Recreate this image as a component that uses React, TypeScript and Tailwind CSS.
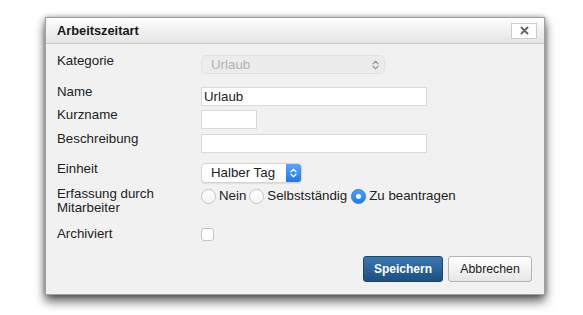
import React from "react";

const font = { fontFamily: '"Liberation Sans", Arial, sans-serif' };

function Chevrons({ color, size = 10 }: { color: string; size?: number }) {
  return (
    <svg width={size * 0.7} height={size} viewBox="0 0 7 10" fill="none">
      <path d="M1 3.8 L3.5 1.3 L6 3.8" stroke={color} strokeWidth="1.3" strokeLinecap="round" strokeLinejoin="round" />
      <path d="M1 6.2 L3.5 8.7 L6 6.2" stroke={color} strokeWidth="1.3" strokeLinecap="round" strokeLinejoin="round" />
    </svg>
  );
}

function Radio({ checked }: { checked?: boolean }) {
  if (checked) {
    return (
      <span className="w-[15px] h-[15px] rounded-full bg-gradient-to-b from-[#4aa3ff] to-[#1a7cf0] border border-[#2a78d8] flex items-center justify-center shrink-0">
        <span className="w-[5px] h-[5px] rounded-full bg-white" />
      </span>
    );
  }
  return (
    <span className="w-[15px] h-[15px] rounded-full bg-gradient-to-b from-white to-[#f4f4f4] border border-[#c4c4c4] shrink-0" />
  );
}

export default function App() {
  return (
    <div className="w-[583px] h-[315px] bg-white relative" style={font}>
      <div className="absolute left-[45px] top-[17px] w-[500px] h-[278px] bg-[#f1f1f1] border border-[#a0a0a0] shadow-[0_6px_10px_rgba(0,0,0,0.65),0_0_5px_rgba(0,0,0,0.3)] flex flex-col">
        {/* Header */}
        <div className="h-[26px] shrink-0 bg-gradient-to-b from-[#fefefe] to-[#e4e4e4] border-b border-[#c9c9c9] flex items-center justify-between pl-[11px] pr-[7px]">
          <span className="text-[12.8px] font-bold text-[#1a1a1a]">Arbeitszeitart</span>
          <button className="w-[26px] h-[16px] bg-white border border-[#cdcdcd] flex items-center justify-center">
            <svg width="9" height="9" viewBox="0 0 9 9">
              <path d="M1.5 1.5 L7.5 7.5 M7.5 1.5 L1.5 7.5" stroke="#666" strokeWidth="2" strokeLinecap="round" />
            </svg>
          </button>
        </div>

        {/* Body */}
        <div className="flex flex-col pl-[11px] text-[13.3px] text-[#222]">
          {/* Kategorie */}
          <div className="flex mt-[9px]">
            <div className="w-[144px] leading-[16px]">Kategorie</div>
            <div className="mt-[2px] w-[184px] h-[19px] rounded-[5px] bg-[#ececec] border border-[#e2e2e2] flex items-center justify-between pl-[9px] pr-[5px] text-[#b3b3b3]">
              <span>Urlaub</span>
              <Chevrons color="#9a9a9a" />
            </div>
          </div>

          {/* Name */}
          <div className="flex mt-[10px]">
            <div className="w-[144px] leading-[16px]">Name</div>
            <div className="mt-[3px] w-[226px] h-[19px] bg-white border border-[#d9d9d9] flex items-center pl-[2px]">
              Urlaub
            </div>
          </div>

          {/* Kurzname */}
          <div className="flex mt-[1px]">
            <div className="w-[144px] leading-[16px]">Kurzname</div>
            <div className="mt-[3px] w-[56px] h-[19px] bg-white border border-[#d9d9d9]" />
          </div>

          {/* Beschreibung */}
          <div className="flex mt-[2px]">
            <div className="w-[144px] leading-[16px]">Beschreibung</div>
            <div className="mt-[3px] w-[226px] h-[19px] bg-white border border-[#d9d9d9]" />
          </div>

          {/* Einheit */}
          <div className="flex mt-[8px]">
            <div className="w-[144px] leading-[16px]">Einheit</div>
            <div className="mt-[2px] w-[101px] h-[20px] rounded-[4px] bg-white border border-[#d4d4d4] flex items-center justify-between overflow-hidden shadow-[0_1px_1px_rgba(0,0,0,0.08)]">
              <span className="pl-[9px]">Halber Tag</span>
              <span className="w-[15px] h-full bg-gradient-to-b from-[#55a6ff] to-[#1b76f0] flex items-center justify-center">
                <Chevrons color="#ffffff" size={10} />
              </span>
            </div>
          </div>

          {/* Erfassung */}
          <div className="flex mt-[4px]">
            <div className="w-[144px] leading-[14px]">
              Erfassung durch
              <br />
              Mitarbeiter
            </div>
            <div className="flex items-center mt-[1px] h-[16px]">
              <Radio />
              <span className="ml-[3px] mr-[3px]">Nein</span>
              <Radio />
              <span className="ml-[3px] mr-[4px]">Selbstständig</span>
              <Radio checked />
              <span className="ml-[3px]">Zu beantragen</span>
            </div>
          </div>

          {/* Archiviert */}
          <div className="flex mt-[11px]">
            <div className="w-[144px] leading-[16px]">Archiviert</div>
            <div className="mt-[2px] w-[13px] h-[13px] rounded-[3px] bg-white border border-[#c4c4c4]" />
          </div>

          {/* Buttons */}
          <div className="flex justify-end gap-[5px] mt-[14px] pr-[12px]">
            <button className="w-[80px] h-[26px] rounded-[3px] bg-gradient-to-b from-[#3a78b0] to-[#1e4f80] border border-[#1b4670] text-white font-bold text-[12px]">
              Speichern
            </button>
            <button className="w-[84px] h-[26px] rounded-[3px] bg-gradient-to-b from-[#ffffff] to-[#e6e6e6] border border-[#b5b5b5] text-[#222] text-[12.3px]">
              Abbrechen
            </button>
          </div>
        </div>
      </div>
    </div>
  );
}
